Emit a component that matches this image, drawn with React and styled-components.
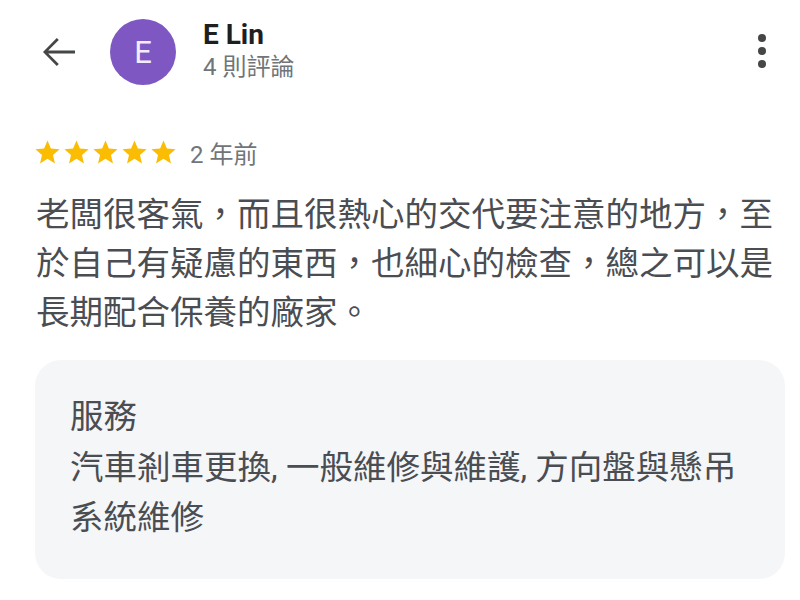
import React from 'react';
import styled, { createGlobalStyle } from 'styled-components';

const GlobalStyle = createGlobalStyle`
  body {
    margin: 0;
    background: #ffffff;
    font-family: Roboto, 'Noto Sans CJK TC', 'Noto Sans', sans-serif;
  }
`;

const Page = styled.div`
  width: 800px;
  height: 600px;
  box-sizing: border-box;
  padding: 19px 15px 0 35px;
  background: #ffffff;
`;

const Header = styled.div`
  display: flex;
  align-items: center;
  height: 66px;
`;

const IconButton = styled.div`
  display: flex;
  align-items: center;
  justify-content: center;
  color: #444746;
`;

const Avatar = styled.div`
  width: 66px;
  height: 66px;
  margin-left: 27px;
  border-radius: 50%;
  background: #7e57c2;
  color: #f3ecff;
  display: flex;
  align-items: center;
  justify-content: center;
  font-size: 31px;
  font-weight: 400;
`;

const Who = styled.div`
  display: flex;
  flex-direction: column;
  margin-left: 27px;
  margin-top: -3px;
`;

const Name = styled.div`
  font-size: 28px;
  font-weight: 700;
  line-height: 32px;
  color: #1f1f1f;
`;

const Meta = styled.div`
  font-size: 24px;
  line-height: 32px;
  color: #70757a;
`;

const Menu = styled(IconButton)`
  margin-left: auto;
  margin-right: 15px;
`;

const RatingRow = styled.div`
  display: flex;
  align-items: center;
  gap: 12px;
  margin-top: 52px;
  height: 30px;
`;

const Stars = styled.div`
  display: flex;
  margin-left: -2px;
`;

const Ago = styled.span`
  font-size: 24px;
  color: #70757a;
`;

const Body = styled.p`
  margin: 23px 0 0 1px;
  font-size: 33.5px;
  line-height: 49px;
  color: #4a4d52;
`;

const ServiceCard = styled.div`
  margin-top: 23px;
  padding: 32px 35px 35px 35px;
  background: #f5f6f8;
  border-radius: 26px;
  font-size: 33.5px;
  line-height: 50.5px;
  color: #4a4d52;
`;

const Star = () => (
  <svg width="29" height="29" viewBox="0 0 24 24">
    <path
      fill="#fbbc04"
      d="M12 17.27 18.18 21l-1.64-7.03L22 9.24l-7.19-.61L12 2 9.19 8.63 2 9.24l5.46 4.73L5.82 21z"
    />
  </svg>
);

export default function App() {
  return (
    <Page>
      <GlobalStyle />
      <Header>
        <IconButton>
          <svg width="48" height="48" viewBox="0 0 24 24">
            <path
              fill="currentColor"
              d="M20 11.3H6.6l5.3-5.3-1-1L4 12l6.9 7 1-1-5.3-5.3H20z"
            />
          </svg>
        </IconButton>
        <Avatar>E</Avatar>
        <Who>
          <Name>E Lin</Name>
          <Meta>4 則評論</Meta>
        </Who>
        <Menu>
          <svg width="16" height="40" viewBox="0 0 16 40">
            <circle cx="8" cy="6" r="4" fill="#444746" />
            <circle cx="8" cy="19" r="4" fill="#444746" />
            <circle cx="8" cy="32" r="4" fill="#444746" />
          </svg>
        </Menu>
      </Header>
      <RatingRow>
        <Stars>
          {[0, 1, 2, 3, 4].map((i) => (
            <Star key={i} />
          ))}
        </Stars>
        <Ago>2 年前</Ago>
      </RatingRow>
      <Body>
        老闆很客氣，而且很熱心的交代要注意的地方，至於自己有疑慮的東西，也細心的檢查，總之可以是長期配合保養的廠家。
      </Body>
      <ServiceCard>
        <div>服務</div>
        <div>汽車剎車更換, 一般維修與維護, 方向盤與懸吊系統維修</div>
      </ServiceCard>
    </Page>
  );
}
